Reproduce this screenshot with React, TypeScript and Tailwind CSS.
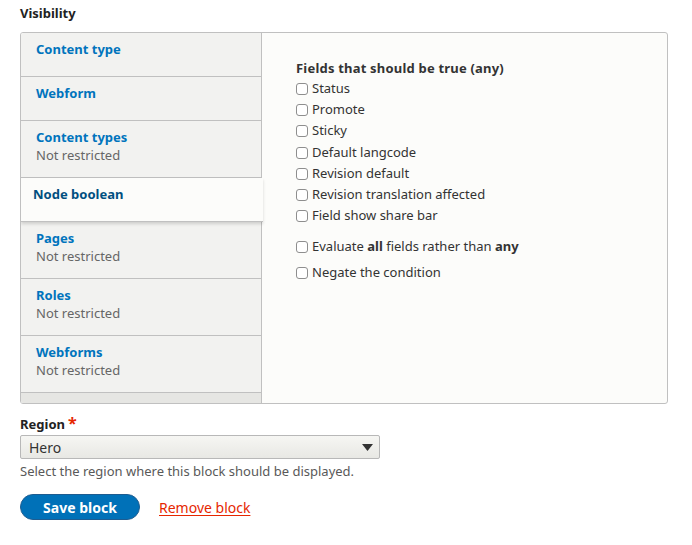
import { useState } from 'react'

const tabs = [
  { title: 'Content type', summary: '' },
  { title: 'Webform', summary: '' },
  { title: 'Content types', summary: 'Not restricted' },
  { title: 'Node boolean', summary: '', selected: true },
  { title: 'Pages', summary: 'Not restricted' },
  { title: 'Roles', summary: 'Not restricted' },
  { title: 'Webforms', summary: 'Not restricted' },
]

const fields = [
  'Status',
  'Promote',
  'Sticky',
  'Default langcode',
  'Revision default',
  'Revision translation affected',
  'Field show share bar',
]

const Box = () => (
  <span className="mr-[4px] inline-block h-[12px] w-[12px] shrink-0 rounded-[3px] border border-[#8e8e8e] bg-white" />
)

export default function App() {
  const [region] = useState('Hero')
  return (
    <div
      className="h-[545px] w-[692px] bg-white px-[20px] pt-[4px] text-[13px] text-[#333]"
      style={{ fontFamily: '"Noto Sans", "DejaVu Sans", sans-serif' }}
    >
      <div className="h-[18px] font-bold leading-[18px] text-[#222]">Visibility</div>
      <div className="mt-[10px] flex h-[372px] w-[648px] overflow-hidden rounded-[3px] border border-[#c0c0c0] bg-[#fcfcfa]">
        <div className="flex w-[241px] shrink-0 flex-col bg-[#f2f2f0]">
          {tabs.map((t) =>
            t.selected ? (
              <div
                key={t.title}
                className="relative z-10 -mr-[1px] h-[44px] border-b border-[#c0c0c0] bg-[#fcfcfa] px-[12px] pt-[7px] font-bold leading-[18px] text-[#004f80] shadow-[0_2px_3px_rgba(0,0,0,0.15)]"
              >
                {t.title}
              </div>
            ) : (
              <div
                key={t.title}
                className={`border-r border-b border-[#c0c0c0] px-[15px] pt-[7px] leading-[18px] ${
                  t.summary ? 'h-[57px]' : 'h-[44px]'
                }`}
              >
                <div className="font-bold text-[#0074bd]">{t.title}</div>
                {t.summary && <div className="text-[#666]">{t.summary}</div>}
              </div>
            ),
          )}
          <div className="flex-1 border-r border-[#c0c0c0] bg-[#e6e6e3]" />
        </div>
        <div className="flex-1 px-[34px] pt-[26px]">
          <div className="mb-[1px] font-bold leading-[18px] tracking-[0.2px] text-[#333]">
            Fields that should be true (any)
          </div>
          {fields.map((f, i) => (
            <label key={f} className={`flex h-[21px] items-center leading-[21px] ${i === 3 ? 'mt-[1px]' : ''}`}>
              <Box />
              {f}
            </label>
          ))}
          <label className="mt-[10px] flex h-[21px] items-center">
            <Box />
            Evaluate&nbsp;<b>all</b>&nbsp;fields rather than&nbsp;<b>any</b>
          </label>
          <label className="mt-[5px] flex h-[21px] items-center">
            <Box />
            Negate the condition
          </label>
        </div>
      </div>

      <div className="mt-[11px] flex h-[18px] items-center font-bold leading-[18px] text-[#222]">
        Region <span className="ml-[3px] -mt-[3px] text-[16px] text-[#e62600]">*</span>
      </div>
      <div className="mt-[2px] flex h-[24px] w-[360px] items-center justify-between rounded-[2px] border border-[#b8b8b8] bg-gradient-to-b from-[#f6f6f3] to-[#e8e8e4] pl-[8px] pr-[6px] text-[14px] text-[#333]">
        <span>{region}</span>
        <svg width="11" height="7" viewBox="0 0 11 7">
          <path d="M0 0 L11 0 L5.5 7 Z" fill="#333" />
        </svg>
      </div>
      <div className="mt-[3px] text-[13px] leading-[18px] text-[#595959]">
        Select the region where this block should be displayed.
      </div>
      <div className="mt-[14px] flex items-center gap-[19px]">
        <button className="h-[26px] w-[120px] rounded-full border border-[#1e5c90] bg-[#0071b8] text-[14px] font-bold text-white">
          Save block
        </button>
        <a className="text-[14px] text-[#e62600] underline underline-offset-2">Remove block</a>
      </div>
    </div>
  )
}
